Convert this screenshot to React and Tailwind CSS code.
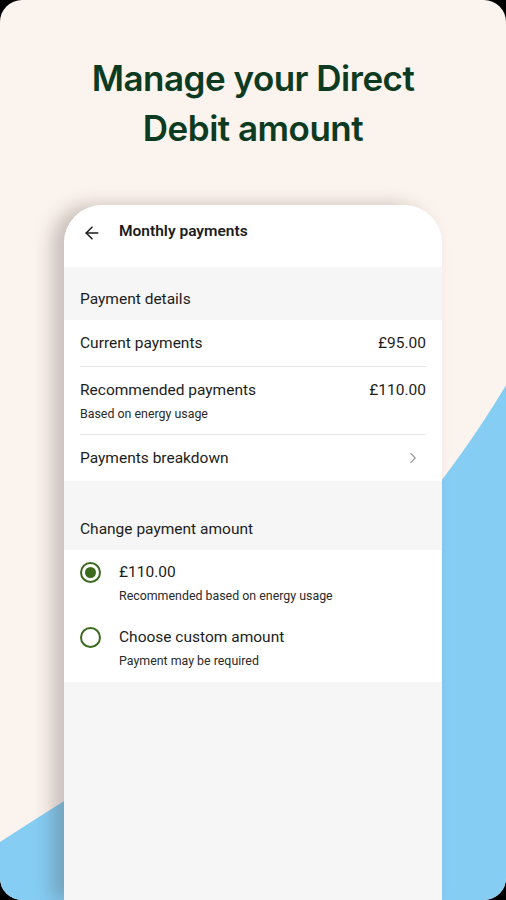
import React from 'react';
import { ArrowLeft, ChevronRight } from 'lucide-react';

// Backdrop shape: cream field with the blue sweep across the bottom right
const Backdrop = () => (
  <svg className="absolute inset-0 h-full w-full" viewBox="0 0 506 900" preserveAspectRatio="none">
    <rect width="506" height="900" fill="#fbf3ee" />
    <path d="M0 842 C 180 725, 370 625, 522 358 L 522 900 L 0 900 Z" fill="#86cdf4" />
  </svg>
);

const Row = ({ title, sub, value, chevron, divider }) => (
  <div className={`flex items-start justify-between py-[12px] ${divider ? 'border-b border-[#e6e6e6]' : ''}`}>
    <div>
      <div className="text-[15.5px] leading-[22px] text-[#1c1c1c]">{title}</div>
      {sub && <div className="mt-[5px] text-[12.4px] leading-[16px] text-[#2a2a2a]">{sub}</div>}
    </div>
    {value && <div className="text-[15.5px] leading-[22px] text-[#1c1c1c]">{value}</div>}
    {chevron && <ChevronRight size={18} strokeWidth={1.5} className="mr-[4px] mt-[2px] text-[#9a9a9a]" />}
  </div>
);

const Radio = ({ checked, title, sub }) => (
  <div className="flex items-start gap-[18px] py-[11px]">
    <div className="mt-[1px] flex h-[21px] w-[21px] shrink-0 items-center justify-center rounded-full border-[2px] border-[#3b6a1e]">
      {checked && <div className="h-[11px] w-[11px] rounded-full bg-[#3b6a1e]" />}
    </div>
    <div>
      <div className="text-[15.5px] leading-[22px] text-[#1c1c1c]">{title}</div>
      <div className="mt-[5px] text-[12.4px] leading-[16px] text-[#2a2a2a]">{sub}</div>
    </div>
  </div>
);

const App = () => {
  return (
    <div className="h-[900px] w-[506px] bg-black">
      <div className="relative h-full w-full overflow-hidden rounded-[22px]">
        <Backdrop />
        <div className="relative flex h-full flex-col items-center">
          <h1 className="mt-[53px] text-center text-[35px] font-semibold leading-[50px] tracking-[-0.5px] text-[#0d3b22] [font-family:Inter,sans-serif]">
            Manage your Direct
            <br />
            Debit amount
          </h1>

          {/* Phone mockup */}
          <div className="mt-[52px] flex w-[378px] flex-1 flex-col overflow-hidden rounded-t-[38px] bg-[#f6f6f6] shadow-[-12px_0_18px_rgba(60,40,30,0.25)] [font-family:Roboto,sans-serif]">
            <div className="flex h-[62px] items-start bg-white pl-[18px] pt-[16px]">
              <ArrowLeft size={20} strokeWidth={1.8} className="mt-[2px] text-[#1c1c1c]" />
              <div className="ml-[17px] text-[15.5px] font-semibold leading-[20px] text-[#1c1c1c]">Monthly payments</div>
            </div>

            <div className="px-[16px] pb-[11px] pt-[22px] text-[15.5px] leading-[20px] text-[#1c1c1c]">Payment details</div>

            <div className="bg-white px-[16px]">
              <Row title="Current payments" value="£95.00" divider />
              <Row title="Recommended payments" sub="Based on energy usage" value="£110.00" divider />
              <Row title="Payments breakdown" chevron />
            </div>

            <div className="px-[16px] pb-[11px] pt-[38px] text-[15.5px] leading-[20px] text-[#1c1c1c]">Change payment amount</div>

            <div className="bg-white px-[16px] pb-[2px]">
              <Radio checked title="£110.00" sub="Recommended based on energy usage" />
              <Radio title="Choose custom amount" sub="Payment may be required" />
            </div>
          </div>
        </div>
      </div>
    </div>
  );
};

export default App;
